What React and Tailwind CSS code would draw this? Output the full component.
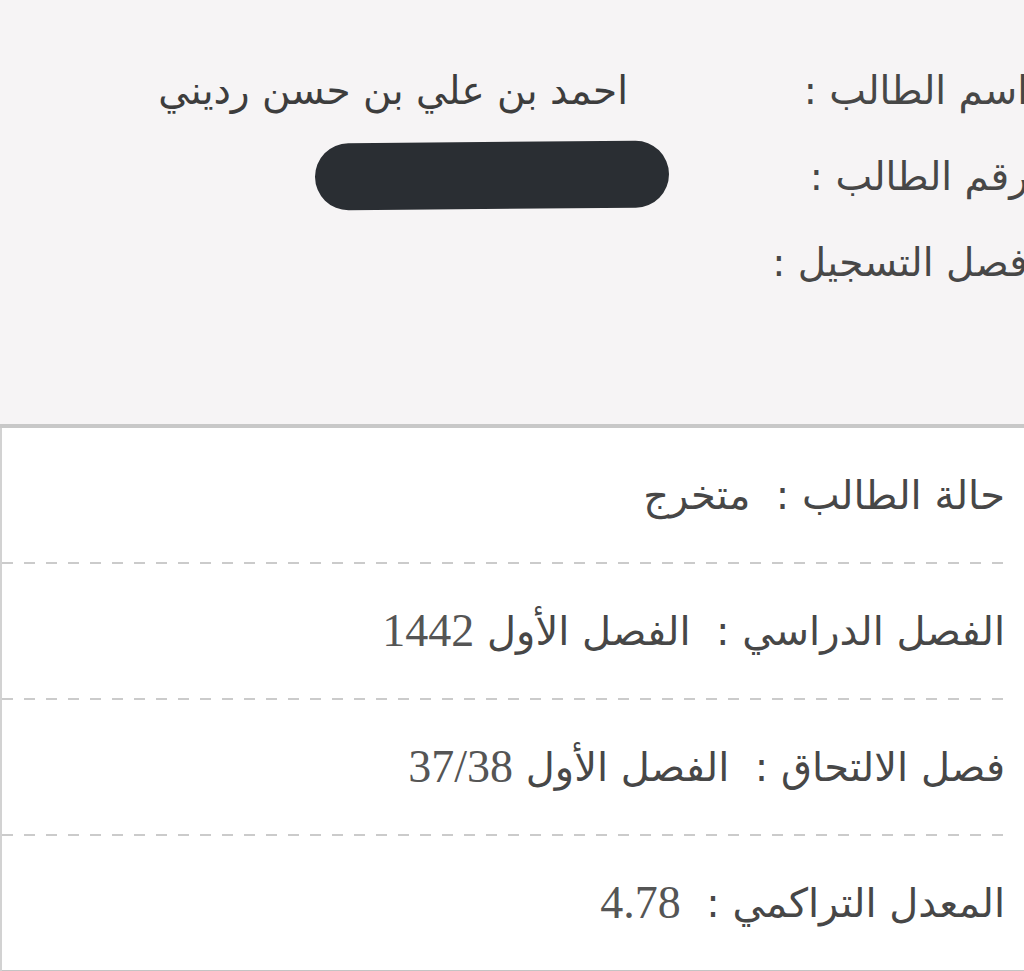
import React from 'react';

const arabic = "font-['DejaVu_Sans',sans-serif]";

const topRows = [
  { label: 'اسم الطالب :', value: 'احمد بن علي بن حسن رديني' },
  { label: 'رقم الطالب :', redacted: true },
  { label: 'فصل التسجيل :', value: '' },
];

const infoRows = [
  { label: 'حالة الطالب', value: 'متخرج' },
  { label: 'الفصل الدراسي', value: 'الفصل الأول', num: '1442' },
  { label: 'فصل الالتحاق', value: 'الفصل الأول', num: '37/38' },
  { label: 'المعدل التراكمي', num: '4.78' },
];

const Dashes = () => (
  <div className="h-[2px] w-full bg-[repeating-linear-gradient(to_right,#cbcbcb_0_11px,transparent_11px_22px)]" />
);

export default function App() {
  return (
    <div dir="rtl" className={`w-[1024px] h-[971px] bg-white overflow-hidden text-[#474747] ${arabic}`}>
      {/* header panel */}
      <div className="h-[424px] bg-[#f6f4f5] overflow-hidden pt-[48px]">
        <div className="-mr-[4px]">
          {topRows.map((r, i) => (
            <div key={i} className="grid grid-cols-[398px_1fr] h-[86px] items-center text-[39px]">
              <div className="whitespace-pre">{r.label}</div>
              <div className="pr-[2px]">
                {r.redacted ? (
                  <div className="w-[354px] h-[67px] rounded-full bg-[#2a2e33] -mr-[41px] -rotate-[0.5deg] -mt-[4px]" />
                ) : (
                  <span className="text-[#3d3d3d]">{r.value}</span>
                )}
              </div>
            </div>
          ))}
        </div>
      </div>

      {/* details panel */}
      <div className="h-[547px] border-t-4 border-[#c8c8c8] bg-white flex">
        <div className="flex-1 flex flex-col">
          <div className="flex-1 flex flex-col">
            {infoRows.map((r, i) => (
              <div key={i} className="flex flex-col">
                <div className="h-[134px] flex items-center pr-[19px] text-[40px] whitespace-pre">
                  <span>{r.label}</span>
                  <span> :  </span>
                  {r.value && <span>{r.value} </span>}
                  {r.num && (
                    <span dir="ltr" className="font-['Liberation_Serif',serif] text-[46px] leading-none text-[#555]">{r.num}</span>
                  )}
                </div>
                {i < infoRows.length - 1 && (
                  <div className="pr-[19px]">
                    <Dashes />
                  </div>
                )}
              </div>
            ))}
          </div>
          <div className="h-[4px] bg-[#c4c4c4]" />
        </div>
        <div className="w-[2px] bg-[#d2d2d2]" />
      </div>
    </div>
  );
}
